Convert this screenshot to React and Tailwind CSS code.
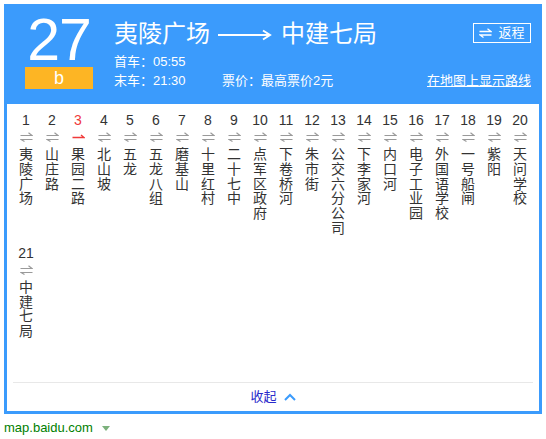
import React from 'react';

const stops = [
  '夷陵广场', '山庄路', '果园二路', '北山坡', '五龙', '五龙八组', '磨基山',
  '十里红村', '二十七中', '点军区政府', '下卷桥河', '朱市街', '公交六分公司',
  '下李家河', '内口河', '电子工业园', '外国语学校', '一号船闸', '紫阳',
  '天问学校', '中建七局',
];

const CURRENT = 3;

const TwoWay = () => (
  <svg width="13" height="10" viewBox="0 0 13 10" fill="none" stroke="#9a9a9a" strokeWidth="1.2">
    <path d="M0.5 3.5H12L8.5 0.8" />
    <path d="M12.5 7.5H1L4.5 9.5" />
  </svg>
);

const BusHere = () => (
  <svg width="13" height="10" viewBox="0 0 13 10" fill="none" stroke="#f03a3a" strokeWidth="1.4">
    <path d="M0.5 5.5H12L9 3" />
  </svg>
);

const Stop = ({ index, name }) => {
  const active = index === CURRENT;
  return (
    <div className="w-[26px] flex flex-col items-center">
      <span className={`text-[14px] leading-[16px] ${active ? 'text-[#f03a3a]' : 'text-[#333]'}`}>{index}</span>
      <div className="mt-[4px] h-[10px]">{active ? <BusHere /> : <TwoWay />}</div>
      <div className="mt-[5px] flex flex-col items-center text-[14px] leading-[14.8px] text-[#333]">
        {name.split('').map((ch, i) => (
          <span key={i}>{ch}</span>
        ))}
      </div>
    </div>
  );
};

const LongArrow = () => (
  <svg width="54" height="12" viewBox="0 0 54 12" fill="none" stroke="#fff" strokeWidth="2">
    <path d="M0 6H51" />
    <path d="M45 1.5L52 6L45 10.5" />
  </svg>
);

const Swap = () => (
  <svg width="13" height="10" viewBox="0 0 13 10" fill="none" stroke="#fff" strokeWidth="1.3">
    <path d="M0.5 3.5H12L8.5 0.8" />
    <path d="M12.5 7H1L4.5 9.5" />
  </svg>
);

export default function App() {
  return (
    <div className="p-[4px] font-['Liberation_Sans','Noto_Sans_CJK_SC',sans-serif]">
      <div className="w-[538px] border-[3px] border-[#3b9bfc] bg-white">
        {/* header */}
        <div className="h-[97px] bg-[#3b9bfc] flex pl-[18px] pr-[8px] text-white">
          <div className="w-[68px] flex flex-col items-center">
            <span className="mt-[8px] text-[59px] leading-[50px] tracking-[-1px]">27</span>
            <div className="mt-[2px] w-[68px] h-[22px] bg-[#fdb524] flex items-center justify-center text-[18px] leading-none">b</div>
          </div>
          <div className="flex-1 ml-[21px] flex flex-col">
            <div className="mt-[13px] flex items-center h-[28px]">
              <span className="text-[24px] leading-[28px]">夷陵广场</span>
              <span className="ml-[8px] mr-[9px] mt-[2px]"><LongArrow /></span>
              <span className="text-[24px] leading-[28px]">中建七局</span>
              <div className="ml-auto mt-[-2px] h-[20px] w-[58px] border border-white flex items-center justify-center gap-[6px] text-[13px]">
                <Swap />
                <span>返程</span>
              </div>
            </div>
            <div className="mt-[5px] text-[13px] leading-[18px]">首车：05:55</div>
            <div className="mt-[1px] flex text-[13px] leading-[18px]">
              <span className="w-[108px]">末车：21:30</span>
              <span>票价：最高票价2元</span>
              <span className="ml-auto underline">在地图上显示路线</span>
            </div>
          </div>
        </div>

        {/* stop list */}
        <div className="h-[278px] pt-[8px] pl-[6px]">
          <div className="w-[520px] flex flex-wrap gap-y-[9px]">
            {stops.map((s, i) => (
              <Stop key={i} index={i + 1} name={s} />
            ))}
          </div>
        </div>

        <div className="mx-[6px] h-px bg-[#e8e8e8]" />
        <div className="h-[28px] flex items-center justify-center gap-[7px]">
          <span className="text-[13px] text-[#2a2acb]">收起</span>
          <svg width="12" height="8" viewBox="0 0 12 8" fill="none" stroke="#3b9bfc" strokeWidth="2">
            <path d="M1 7L6 2L11 7" />
          </svg>
        </div>
      </div>
      <div className="mt-[6px] flex items-center text-[13px] leading-[15px]">
        <span className="text-[#008000]">map.baidu.com</span>
        <svg className="ml-[9px] mt-[2px]" width="8" height="5" viewBox="0 0 8 5">
          <path d="M0 0H8L4 5Z" fill="#7cb17c" />
        </svg>
      </div>
    </div>
  );
}
